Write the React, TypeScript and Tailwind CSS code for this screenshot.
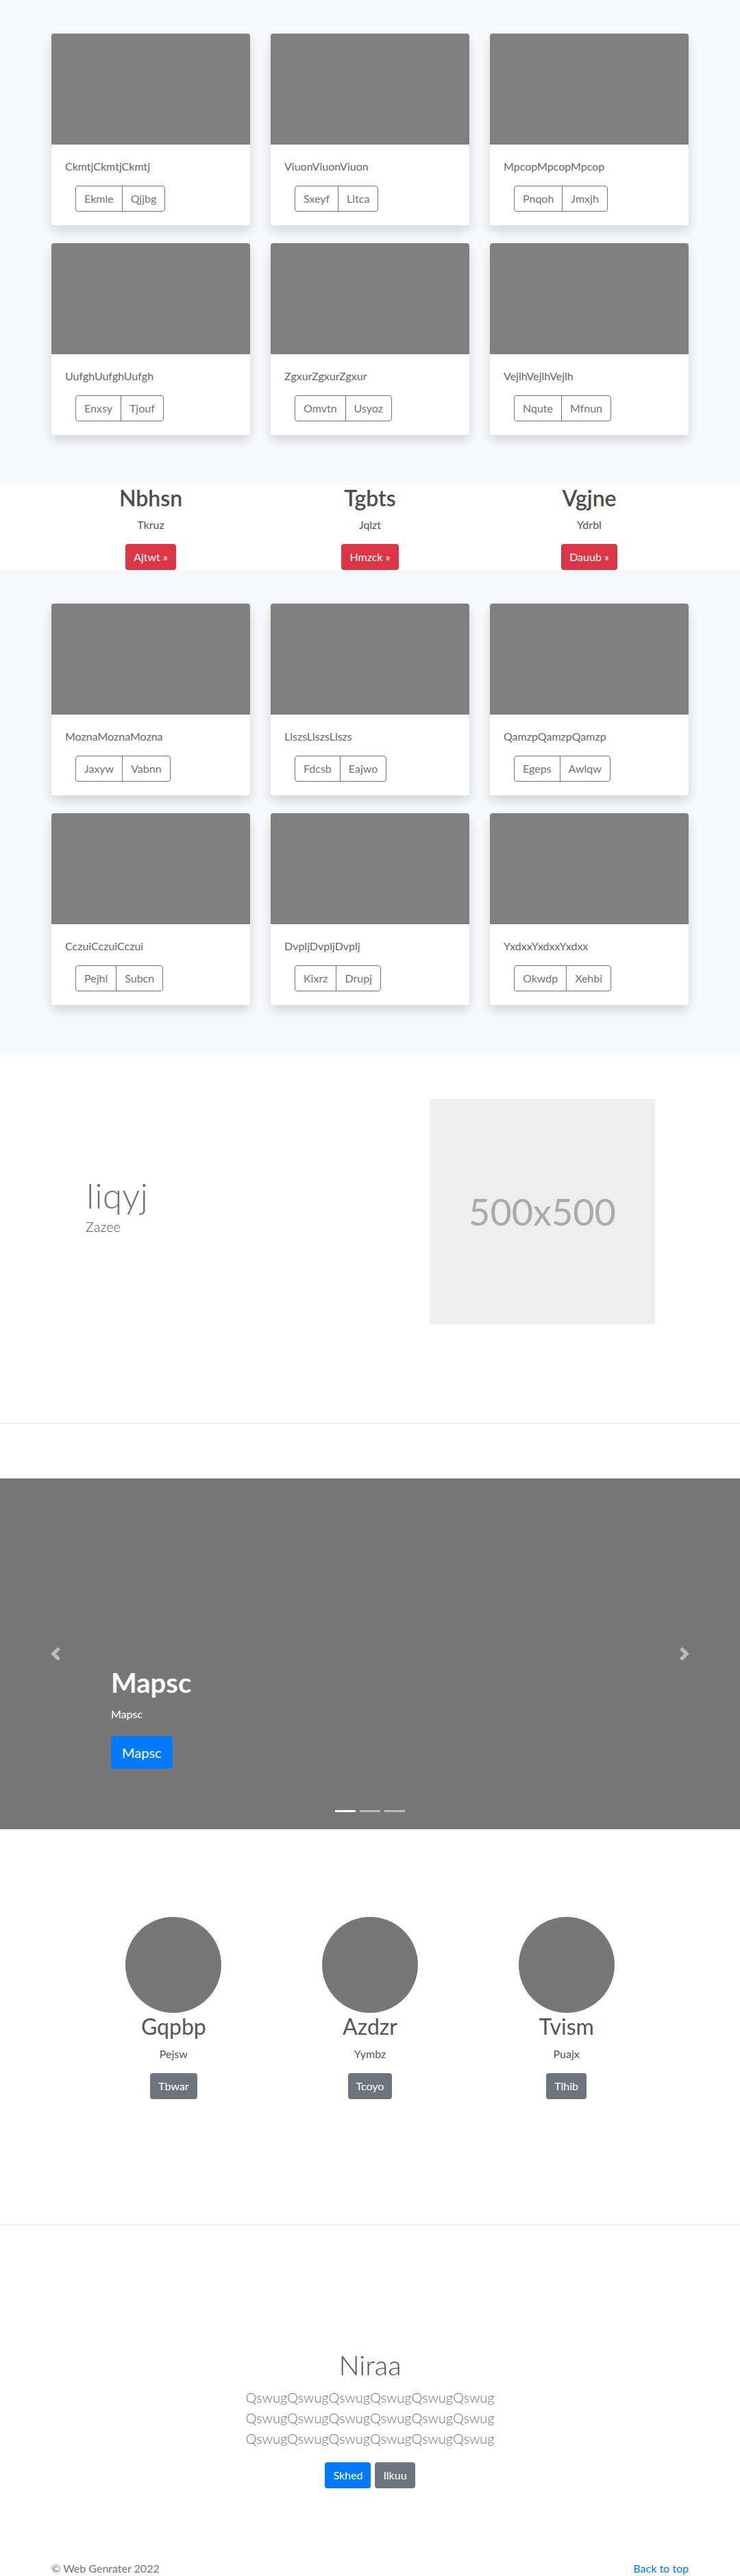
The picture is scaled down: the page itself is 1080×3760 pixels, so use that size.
import React from 'react'

type CardData = { title: string; a: string; b: string }

const topCards: CardData[] = [
  { title: 'CkmtjCkmtjCkmtj', a: 'Ekmle', b: 'Qjjbg' },
  { title: 'ViuonViuonViuon', a: 'Sxeyf', b: 'Litca' },
  { title: 'MpcopMpcopMpcop', a: 'Pnqoh', b: 'Jmxjh' },
  { title: 'UufghUufghUufgh', a: 'Enxsy', b: 'Tjouf' },
  { title: 'ZgxurZgxurZgxur', a: 'Omvtn', b: 'Usyoz' },
  { title: 'VejlhVejlhVejlh', a: 'Nqute', b: 'Mfnun' },
]

const bottomCards: CardData[] = [
  { title: 'MoznaMoznaMozna', a: 'Jaxyw', b: 'Vabnn' },
  { title: 'LlszsLlszsLlszs', a: 'Fdcsb', b: 'Eajwo' },
  { title: 'QamzpQamzpQamzp', a: 'Egeps', b: 'Awlqw' },
  { title: 'CczuiCczuiCczui', a: 'Pejhl', b: 'Subcn' },
  { title: 'DvpljDvpljDvplj', a: 'Kixrz', b: 'Drupj' },
  { title: 'YxdxxYxdxxYxdxx', a: 'Okwdp', b: 'Xehbi' },
]

const features = [
  { title: 'Nbhsn', text: 'Tkruz', cta: 'Ajtwt »' },
  { title: 'Tgbts', text: 'Jqlzt', cta: 'Hmzck »' },
  { title: 'Vgjne', text: 'Ydrbl', cta: 'Dauub »' },
]

const people = [
  { name: 'Gqpbp', text: 'Pejsw', cta: 'Tbwar' },
  { name: 'Azdzr', text: 'Yymbz', cta: 'Tcoyo' },
  { name: 'Tvism', text: 'Puajx', cta: 'Tlhib' },
]

function Card({ title, a, b }: CardData) {
  return (
    <div className="bg-white rounded overflow-hidden shadow-[0_8px_16px_rgba(0,0,0,0.15)]">
      <div className="h-[162px] bg-[#808080]" />
      <div className="p-5">
        <p className="text-[16px] leading-6 text-[#666]">{title}</p>
        <div className="mt-4 ml-[15px] inline-flex h-[38px] border border-[#6c757d] rounded text-[16px] leading-[36px] text-[#6c757d]">
          <span className="px-3">{a}</span>
          <span className="px-3 border-l border-[#6c757d]">{b}</span>
        </div>
      </div>
    </div>
  )
}

function CardSection({ cards }: { cards: CardData[] }) {
  return (
    <section className="bg-[#f8f9fa] pt-[49px] pb-[73px]">
      <div className="mx-auto w-[930px] grid grid-cols-3 gap-x-[30px] gap-y-[26px]">
        {cards.map(c => (
          <Card key={c.title} {...c} />
        ))}
      </div>
    </section>
  )
}

function Chevron({ dir }: { dir: 'prev' | 'next' }) {
  return (
    <svg width="20" height="20" viewBox="0 0 8 8" fill="#fff">
      {dir === 'prev' ? (
        <path d="M5.25 0l-4 4 4 4 1.5-1.5L4.25 4l2.5-2.5L5.25 0z" />
      ) : (
        <path d="M2.75 0l-1.5 1.5L3.75 4l-2.5 2.5L2.75 8l4-4-4-4z" />
      )}
    </svg>
  )
}

export default function App() {
  return (
    <div className="w-[1080px] h-[3760px] overflow-hidden bg-white text-[#212529] font-['Segoe_UI','Lato',sans-serif]">
      <CardSection cards={topCards} />

      {/* feature columns */}
      <section className="bg-white">
        <div className="mx-auto w-[960px] grid grid-cols-3">
          {features.map(f => (
            <div key={f.title} className="flex flex-col items-center text-center">
              <h2 className="text-[32px] leading-[38px] font-semibold text-[#4d4d4d] mb-2">{f.title}</h2>
              <p className="text-[16px] leading-6 text-[#555] mb-4">{f.text}</p>
              <a className="inline-block h-[38px] px-3 rounded bg-[#dc3545] text-white text-[16px] leading-[38px]">
                {f.cta}
              </a>
            </div>
          ))}
        </div>
      </section>

      <CardSection cards={bottomCards} />

      {/* featurette */}
      <section className="pt-16 pb-16">
        <div className="mx-auto w-[930px] flex items-center">
          <div className="flex-1 pl-[50px] mb-[20px]">
            <h1 className="text-[52px] leading-[62px] font-light text-[#6c757d]">Iiqyj</h1>
            <p className="text-[20px] leading-[30px] font-light text-[#555]">Zazee</p>
          </div>
          <div className="w-[329px] h-[329px] mr-[49px] bg-[#eee] flex items-center justify-center text-[#aaa] text-[54px]">
            500x500
          </div>
        </div>
      </section>
      <div className="h-px bg-[#e5e5e5] my-20" />

      {/* carousel */}
      <div className="relative h-[512px] bg-[#777]">
        <div className="absolute left-0 top-0 bottom-0 w-[15%] flex items-center justify-center opacity-50">
          <Chevron dir="prev" />
        </div>
        <div className="absolute right-0 top-0 bottom-0 w-[15%] flex items-center justify-center opacity-50">
          <Chevron dir="next" />
        </div>
        <div className="absolute left-[15%] right-[15%] bottom-[88px] text-white">
          <h1 className="text-[40px] leading-[48px] font-bold">Mapsc</h1>
          <p className="mt-[10px] text-[16px] leading-6">Mapsc</p>
          <a className="mt-[20px] inline-block h-[48px] px-4 rounded-[5px] bg-[#007bff] text-[20px] leading-[48px]">
            Mapsc
          </a>
        </div>
        <div className="absolute left-0 right-0 bottom-[25px] flex justify-center gap-[6px]">
          <span className="w-[30px] h-[3px] bg-white" />
          <span className="w-[30px] h-[3px] bg-white/50" />
          <span className="w-[30px] h-[3px] bg-white/50" />
        </div>
      </div>

      {/* people */}
      <section className="pt-[128px] pb-[183px]">
        <div className="mx-auto w-[860px] grid grid-cols-3">
          {people.map(p => (
            <div key={p.name} className="flex flex-col items-center text-center">
              <div className="w-[140px] h-[140px] rounded-full bg-[#777]" />
              <h2 className="text-[32px] leading-[40px] text-[#555] mb-2">{p.name}</h2>
              <p className="text-[16px] leading-6 text-[#555] mb-4">{p.text}</p>
              <a className="inline-block h-[38px] px-3 rounded bg-[#6c757d] text-white text-[16px] leading-[38px]">
                {p.cta}
              </a>
            </div>
          ))}
        </div>
      </section>
      <div className="h-px bg-[#e5e5e5]" />

      {/* jumbotron */}
      <section className="pt-[180px] text-center">
        <h1 className="text-[40px] leading-[48px] font-light text-[#555] mb-2">Niraa</h1>
        <p className="mx-auto max-w-[610px] text-[20px] leading-[30px] font-light text-[#6c757d]">
          QswugQswugQswugQswugQswugQswug QswugQswugQswugQswugQswugQswug QswugQswugQswugQswugQswugQswug
        </p>
        <div className="mt-[20px] flex justify-center gap-[6px]">
          <a className="h-[38px] px-3 rounded bg-[#007bff] text-white text-[16px] leading-[38px]">Skhed</a>
          <a className="h-[38px] px-3 rounded bg-[#6c757d] text-white text-[16px] leading-[38px]">Ilkuu</a>
        </div>
      </section>

      <footer className="pt-[105px]">
        <div className="mx-auto w-[930px] flex justify-between text-[16px] leading-6">
          <p className="text-[#6c757d]">© Web Genrater 2022</p>
          <a className="text-[#007bff]">Back to top</a>
        </div>
      </footer>
    </div>
  )
}
